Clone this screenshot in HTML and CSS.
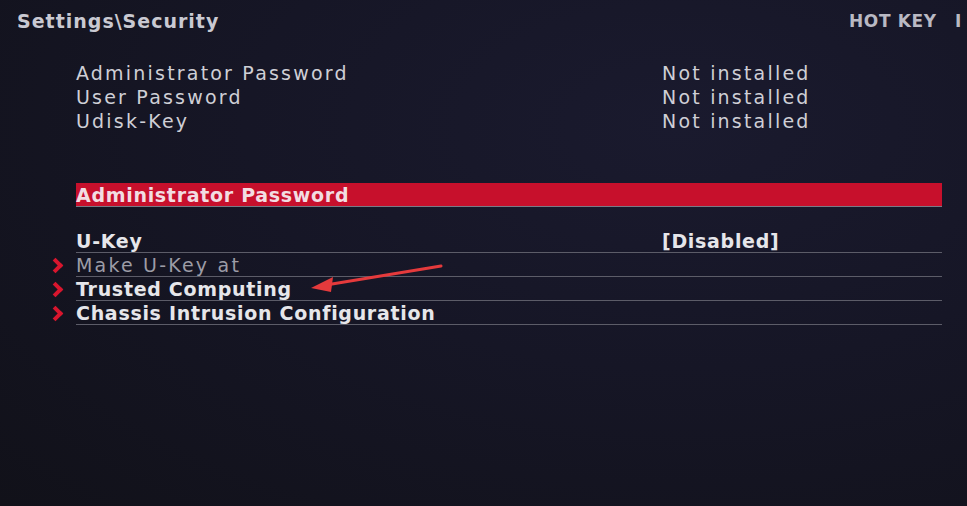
FILE: index.html
```html
<!DOCTYPE html>
<html>
<head>
<meta charset="utf-8">
<link rel="stylesheet" href="styles.css">
</head>
<body>
<div class="screen">
  <header class="top">
    <div class="title">Settings\Security</div>
    <div class="hotkey">HOT KEY <span class="sep">I</span></div>
  </header>
  <section class="info">
    <div class="info-row"><span class="label">Administrator Password</span><span class="val">Not installed</span></div>
    <div class="info-row"><span class="label">User Password</span><span class="val">Not installed</span></div>
    <div class="info-row"><span class="label">Udisk-Key</span><span class="val">Not installed</span></div>
  </section>
  <section class="menu">
    <div class="row selected"><span class="gut"></span><div class="body"><span class="label">Administrator Password</span></div></div>
    <div class="row first"><span class="gut"></span><div class="body"><span class="label">U-Key</span><span class="val">[Disabled]</span></div></div>
    <div class="row dim"><span class="gut"><span class="chev"></span></span><div class="body"><span class="label">Make U-Key at</span></div></div>
    <div class="row"><span class="gut"><span class="chev"></span></span><div class="body"><span class="label">Trusted Computing</span></div></div>
    <div class="row"><span class="gut"><span class="chev"></span></span><div class="body"><span class="label">Chassis Intrusion Configuration</span></div></div>
  </section>
  <svg class="arrow" width="967" height="506" viewBox="0 0 967 506">
    <line x1="441" y1="266" x2="326" y2="285" stroke="#e53a3c" stroke-width="3" stroke-linecap="round"/>
    <polygon points="311,288 333,277 331,292" fill="#e53a3c"/>
  </svg>
</div>
</body>
</html>
```
FILE: styles.css
```css
html, body {
  margin: 0;
  padding: 0;
}
body {
  width: 967px;
  height: 506px;
  overflow: hidden;
  background: #141420;
  font-family: "DejaVu Sans", sans-serif;
}
.screen {
  position: relative;
  width: 967px;
  height: 506px;
  background: radial-gradient(ellipse at 70% 25%, #1a1a2e 0%, #161626 45%, #111119 100%);
  color: #d6d6dc;
}
.top {
  display: flex;
  justify-content: space-between;
  align-items: center;
  height: 41px;
  padding: 0 5px 0 17px;
}
.title {
  font-size: 19px;
  font-weight: bold;
  letter-spacing: 1px;
  color: #c9c9d2;
}
.hotkey {
  font-size: 17px;
  font-weight: bold;
  letter-spacing: 0.6px;
  color: #b9b9c3;
  white-space: nowrap;
}
.hotkey .sep {
  margin-left: 12px;
}
.info {
  padding: 20px 0 0 76px;
}
.info-row {
  display: flex;
  height: 24px;
  align-items: center;
  font-size: 19px;
  letter-spacing: 2.2px;
  color: #cfcfd6;
}
.label {
  width: 586px;
  flex: none;
  white-space: nowrap;
}
.menu {
  padding: 50px 25px 0 50px;
}
.row {
  display: flex;
  height: 24px;
  font-size: 19px;
  letter-spacing: 0.7px;
  font-weight: bold;
  color: #e6e6ea;
}
.gut {
  width: 26px;
  flex: none;
  display: flex;
  align-items: center;
}
.body {
  flex: 1;
  display: flex;
  align-items: center;
  border-bottom: 1px solid #5c5c68;
}
.row.selected .body {
  background: #c7102c;
  border-bottom: 1px solid #7a7a86;
  color: #f2dde2;
}
.row.first {
  margin-top: 22px;
}
.row.dim {
  font-weight: normal;
  letter-spacing: 2.2px;
  color: #9c9ca6;
}
.chev {
  width: 7px;
  height: 7px;
  border-right: 4px solid #d8162e;
  border-top: 4px solid #d8162e;
  transform: rotate(45deg);
  margin-left: 0;
}
.arrow {
  position: absolute;
  left: 0;
  top: 0;
  pointer-events: none;
}
```
